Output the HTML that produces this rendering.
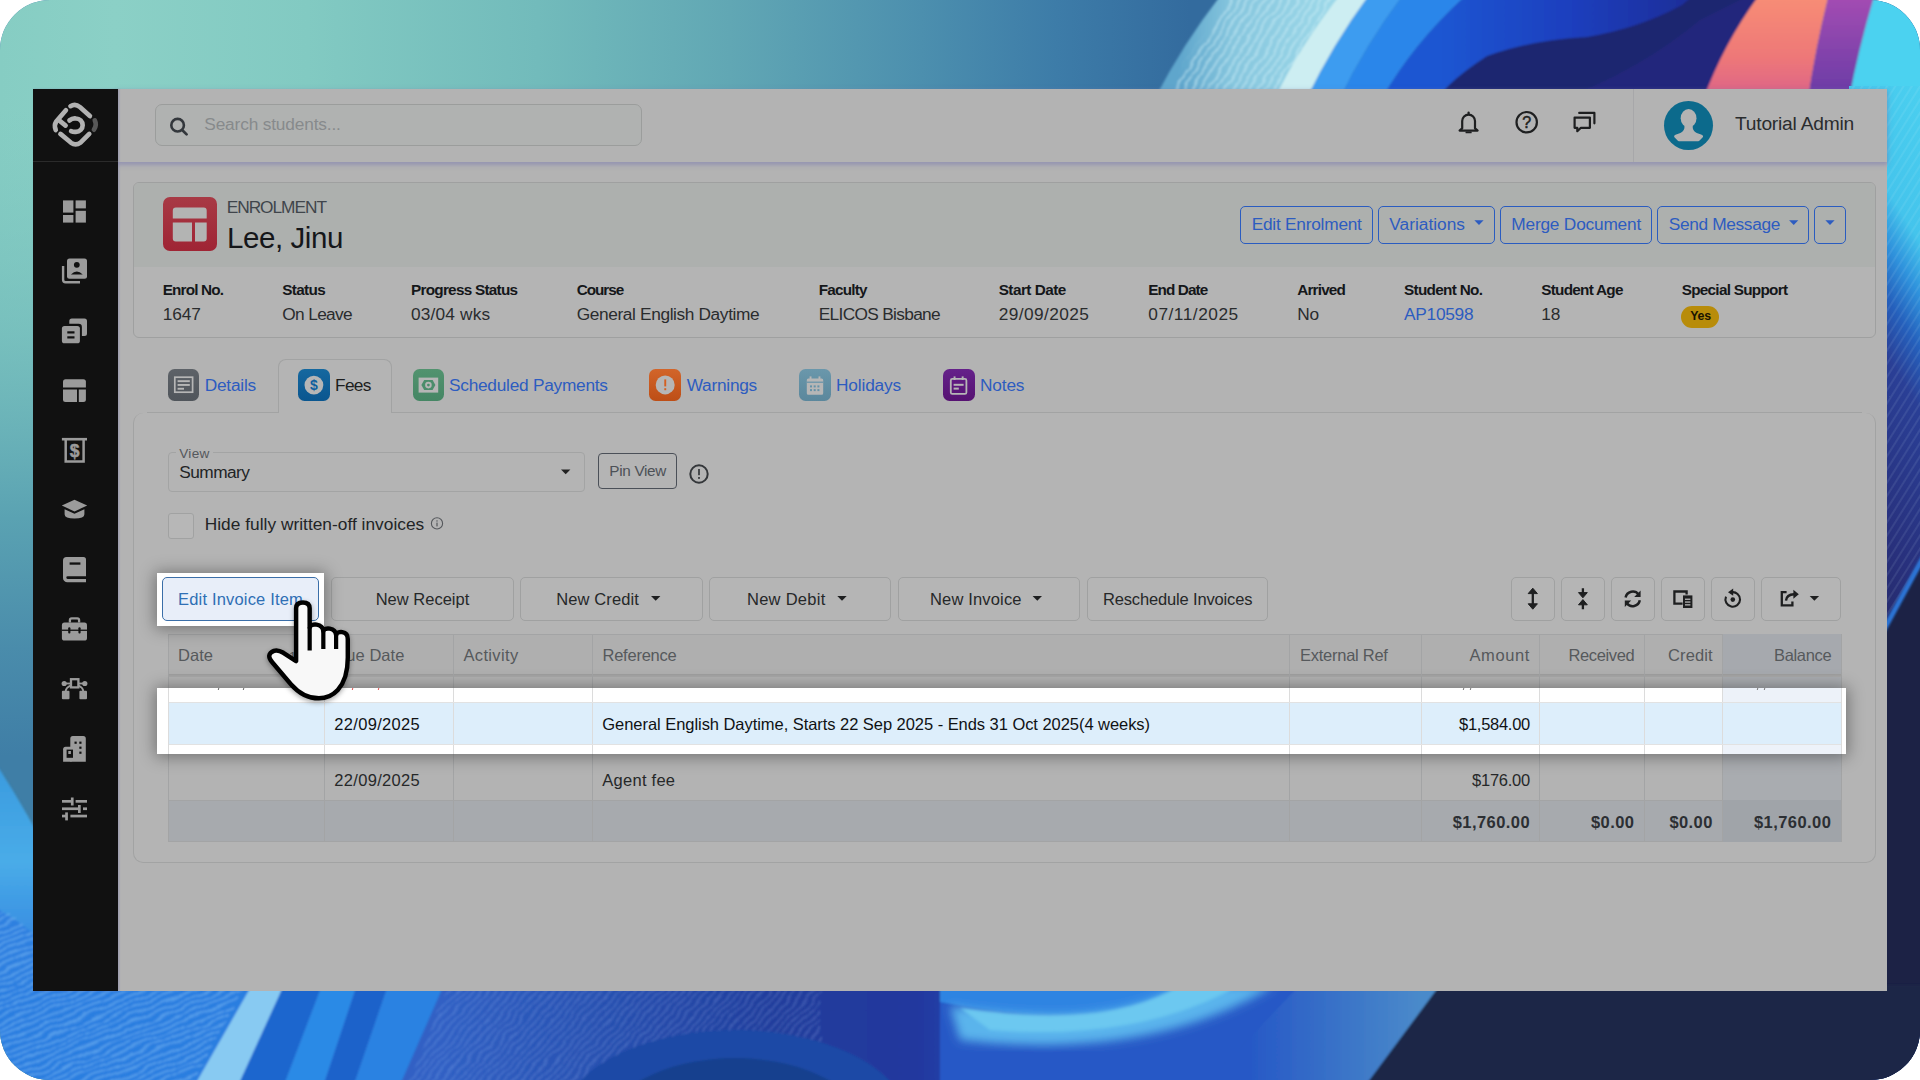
<!DOCTYPE html>
<html lang="en"><head><meta charset="utf-8"><title>Enrolment - Lee, Jinu</title>
<style>
html,body{margin:0;padding:0;background:#fff;}
body{width:1920px;height:1080px;position:relative;overflow:hidden;font-family:'Liberation Sans',sans-serif;}
.a{position:absolute;box-sizing:border-box;}
.t{position:absolute;white-space:pre;line-height:1;}
svg{position:absolute;overflow:visible;}
</style></head><body>
<div class="a" id="bg" style="left:0;top:0;width:1920px;height:1080px;border-radius:50px;overflow:hidden;background:#3a78a8;">
<svg width="1920" height="1080" viewBox="0 0 1920 1080" style="left:0;top:0">
<defs>
<linearGradient id="gTop" x1="0" y1="0" x2="1920" y2="0" gradientUnits="userSpaceOnUse">
<stop offset="0" stop-color="#86cdc3"/><stop offset="0.06" stop-color="#8bd0c6"/><stop offset="0.16" stop-color="#82cac2"/><stop offset="0.28" stop-color="#72bbbb"/>
<stop offset="0.38" stop-color="#61a7b4"/><stop offset="0.48" stop-color="#4c8fae"/><stop offset="0.55" stop-color="#3d7ca8"/><stop offset="0.62" stop-color="#336b9e"/><stop offset="1" stop-color="#336b9e"/>
</linearGradient>
<linearGradient id="gLeft" x1="0" y1="0" x2="0" y2="1080" gradientUnits="userSpaceOnUse">
<stop offset="0.1" stop-color="#7cc6c0" stop-opacity="0"/><stop offset="0.3" stop-color="#6fb8ba" stop-opacity=".6"/><stop offset="0.48" stop-color="#5aa2b2"/><stop offset="0.6" stop-color="#4a8cab"/><stop offset="0.7" stop-color="#3f7ea6"/>
</linearGradient>
<linearGradient id="gRight" x1="0" y1="0" x2="0" y2="1080" gradientUnits="userSpaceOnUse" gradientTransform="translate(1887,0) skewY(58) translate(-1887,0)">
<stop offset="0" stop-color="#4cd2f0"/><stop offset="0.175" stop-color="#44c4ec"/><stop offset="0.225" stop-color="#2f92dc"/><stop offset="0.275" stop-color="#2560bc"/><stop offset="0.33" stop-color="#2a3f96"/><stop offset="0.5" stop-color="#28307c"/><stop offset="0.56" stop-color="#262c70"/>
</linearGradient>
<linearGradient id="gCoral" x1="0" y1="0" x2="0" y2="95" gradientUnits="userSpaceOnUse"><stop offset="0" stop-color="#f78c76"/><stop offset="0.6" stop-color="#ee7878"/><stop offset="1" stop-color="#dc6488"/></linearGradient>
<linearGradient id="gPurple" x1="0" y1="0" x2="0" y2="95" gradientUnits="userSpaceOnUse"><stop offset="0" stop-color="#a24cb2"/><stop offset="1" stop-color="#6a3ca6"/></linearGradient>
<linearGradient id="gRip" x1="1180" y1="0" x2="1330" y2="0" gradientUnits="userSpaceOnUse"><stop offset="0" stop-color="#5fa6cc"/><stop offset="0.35" stop-color="#86c6de"/><stop offset="1" stop-color="#9cd8e8"/></linearGradient>
<linearGradient id="gRoyal" x1="1440" y1="0" x2="1700" y2="0" gradientUnits="userSpaceOnUse"><stop offset="0" stop-color="#1d56d2"/><stop offset="0.5" stop-color="#1a3fbe"/><stop offset="1" stop-color="#1c2c96"/></linearGradient>
<linearGradient id="gBotRip" x1="440" y1="0" x2="1000" y2="0" gradientUnits="userSpaceOnUse"><stop offset="0" stop-color="#3060c4"/><stop offset="0.3" stop-color="#2850b0"/><stop offset="0.6" stop-color="#213d9c"/><stop offset="0.85" stop-color="#23389e"/><stop offset="1" stop-color="#2248b8"/></linearGradient>
<pattern id="pRip" width="7" height="7" patternUnits="userSpaceOnUse" patternTransform="rotate(-58)"><rect width="7" height="2" fill="#d8f4fa" opacity=".45"/></pattern>
<pattern id="pRipB" width="6" height="6" patternUnits="userSpaceOnUse" patternTransform="rotate(-22)"><rect width="6" height="1.6" fill="#9cd4fa" opacity=".42"/></pattern>
<pattern id="pRipC" width="6" height="6" patternUnits="userSpaceOnUse" patternTransform="rotate(-48)"><rect width="6" height="1.5" fill="#a8c8f8" opacity=".24"/></pattern>
<linearGradient id="gSteel" x1="1250" y1="0" x2="1420" y2="0" gradientUnits="userSpaceOnUse"><stop offset="0" stop-color="#2759c6"/><stop offset="1" stop-color="#4a8aca"/></linearGradient>
<linearGradient id="gLB" x1="0" y1="760" x2="0" y2="930" gradientUnits="userSpaceOnUse"><stop offset="0" stop-color="#3a9ade"/><stop offset="0.6" stop-color="#49ace8"/><stop offset="1" stop-color="#3a90e2"/></linearGradient>
<filter id="wav" x="-5%" y="-5%" width="110%" height="110%"><feTurbulence type="fractalNoise" baseFrequency="0.035 0.06" numOctaves="2" seed="7" result="n"/><feDisplacementMap in="SourceGraphic" in2="n" scale="9" xChannelSelector="R" yChannelSelector="G"/><feGaussianBlur stdDeviation="0.5"/></filter>
<filter id="b2"><feGaussianBlur stdDeviation="1.2"/></filter>
<filter id="b6"><feGaussianBlur stdDeviation="5"/></filter>
</defs>
<rect width="1920" height="1080" fill="url(#gTop)"/>
<rect x="0" y="60" width="700" height="1020" fill="url(#gLeft)"/>
<g filter="url(#b2)">
<path d="M1225 -10 L1345 -10 L1275 100 L1154 100 Q1185 40 1225 -10z" fill="url(#gRip)"/>
<path d="M1235 -10 L1345 -10 L1275 100 L1164 100 Q1195 40 1235 -10z" fill="url(#pRip)" filter="url(#wav)"/>
<path d="M1344 -10 L1373 -10 Q1335 40 1306 100 L1274 100 Q1300 45 1344 -10z" fill="#cdeef2"/>
<path d="M1373 -10 L1407 -10 Q1368 40 1339 100 L1306 100 Q1335 40 1373 -10z" fill="#3c9cf0"/>
<path d="M1407 -10 L1472 -10 Q1415 40 1381 100 L1339 100 Q1368 40 1407 -10z" fill="#2b86ea"/>
<path d="M1472 -10 L1720 -10 L1720 100 L1381 100 Q1415 40 1472 -10z" fill="url(#gRoyal)"/>
<path d="M1436 100 Q1450 80 1487 56 Q1531 40 1587 37 Q1640 28 1682 5 L1700 -10 L1780 -10 L1720 100z" fill="#1d2670"/>
<path d="M1560 100 Q1640 70 1700 20 L1760 -10 L1720 100z" fill="#23277c"/>
<path d="M1763 -10 L1830 -10 Q1815 50 1808 100 L1703 100 Q1725 40 1763 -10z" fill="url(#gCoral)"/>
<path d="M1830 -10 L1876 -10 Q1858 50 1849 100 L1808 100 Q1815 50 1830 -10z" fill="url(#gPurple)"/>
<path d="M1876 -10 L1930 -10 L1930 100 L1849 100 Q1858 50 1876 -10z" fill="#4cd2f0"/>
</g>
<rect x="1849" y="86" width="80" height="1000" fill="url(#gRight)"/>
<rect x="1849" y="86" width="80" height="540" fill="url(#pRip)" opacity=".2"/>
<path d="M1930 548 L1880 640 L1880 1090 L1930 1090z" fill="#1c2245"/>
<path d="M1930 545 L1880 637" stroke="#2c74d4" stroke-width="5" fill="none" filter="url(#b2)"/>
<g filter="url(#b2)">
<rect x="-10" y="980" width="1460" height="110" fill="url(#gBotRip)"/>
<path d="M-10 755 Q14 790 40 838 L70 900 L70 1090 L-10 1090z" fill="url(#gLB)"/>
<path d="M-10 905 Q30 925 60 960 L300 985 L260 1090 L-10 1090z" fill="#2f80e0"/>
<path d="M-10 905 Q30 925 60 960 L300 985 L260 1090 L-10 1090z" fill="url(#pRipB)" filter="url(#wav)"/>
<path d="M-10 985 L252 985 L194 1090 L-10 1090z" fill="#2c7ee0"/>
<path d="M-10 985 L246 985 L188 1090 L-10 1090z" fill="url(#pRipB)" filter="url(#wav)"/>
<path d="M252 985 L284 985 L236 1090 L192 1090z" fill="#88caf2"/>
<path d="M284 985 L322 985 L282 1090 L236 1090z" fill="#1e66ce"/>
<path d="M322 985 L357 985 L322 1090 L282 1090z" fill="#2c8ae6"/>
<path d="M357 985 L388 985 L352 1090 L322 1090z" fill="#1e62ca"/>
<path d="M388 985 L444 985 L398 1090 L352 1090z" fill="#2a82e2"/>
<path d="M444 985 L470 985 L420 1090 L398 1090z" fill="#2f6ed0"/>
<path d="M444 985 L1000 985 L1000 1090 L398 1090z" fill="url(#gBotRip)"/>
<path d="M450 985 L820 985 L820 1090 L404 1090z" fill="url(#pRipC)" filter="url(#wav)"/>
<ellipse cx="735" cy="1125" rx="175" ry="95" fill="#1c4aa6"/>
<ellipse cx="735" cy="1130" rx="130" ry="72" fill="#17408e"/>
<ellipse cx="735" cy="1135" rx="95" ry="52" fill="#1a4aa0"/>
<rect x="940" y="985" width="520" height="105" fill="#2759c6"/>
<path d="M940 985 L1180 985 Q1110 1034 940 1002z" fill="#2f84e2"/>
<path d="M960 1040 Q1150 1062 1275 985 L1180 985 Q1110 1030 950 1006z" fill="#5ab4ec" filter="url(#b6)"/>
<path d="M990 1030 Q1140 1042 1240 985 L1180 985 Q1110 1030 960 1008z" fill="#6cc8f0" filter="url(#b2)"/>
<path d="M1300 985 L1442 985 L1364 1090 L1200 1090z" fill="url(#gSteel)"/>
<path d="M1440 985 L1930 985 L1930 1090 L1362 1090z" fill="#1d2647"/>
</g>
</svg></div>
<div class="a" style="left:33.0px;top:89.0px;width:1854.3px;height:902.0px;background:#b3b3b3;"></div>
<div class="a" style="left:118.0px;top:89.0px;width:1769.3px;height:73.0px;background:#b3b3b3;box-shadow:0 2px 4px 1px rgba(120,120,175,.5);"></div>
<div class="a" style="left:1632.5px;top:89.0px;width:1.0px;height:73.0px;background:#a7a7a9;"></div>
<div class="a" style="left:33.0px;top:89.0px;width:84.8px;height:902.0px;background:#111111;box-shadow:1px 0 2px rgba(110,110,170,.4);"></div>
<div class="a" style="left:33.0px;top:161.0px;width:84.8px;height:1.0px;background:#2b2b2b;"></div>
<div class="a" style="left:154.7px;top:104.3px;width:487.0px;height:41.4px;background:#b0b2b1;border:1px solid #9b9d9c;border-radius:7px;"></div>
<div class="a" style="left:1664.2px;top:100.8px;width:49.2px;height:49.2px;border-radius:50%;background:#0c6a8c;overflow:hidden;"><svg style="left:0;top:0" width="49.2" height="49.2" viewBox="0 0 49.2 49.2"><ellipse cx="24.6" cy="17.2" rx="7.9" ry="9.1" fill="#b3b3b3"/><path d="M20.4 24.5 C20.9 29 19 31 15 32.5 L11.5 33.8 Q9.5 34.6 10.2 36 L13.6 39.6 Q14.2 40.2 15 40.2 L34.2 40.2 Q35 40.2 35.6 39.6 L39 36 Q39.7 34.6 37.7 33.8 L34.2 32.5 C30.2 31 28.3 29 28.8 24.5 Z" fill="#b3b3b3"/></svg></div>
<div class="a" style="left:132.7px;top:181.7px;width:1743.0px;height:156.2px;background:#b4b4b4;border:1px solid #9fa0a0;border-radius:6px;"></div>
<div class="a" style="left:133.7px;top:182.7px;width:1741.0px;height:84.0px;background:#adb0ae;border-radius:5px 5px 0 0;"></div>
<div class="a" style="left:163px;top:197.3px;width:54px;height:54px;border-radius:7px;background:linear-gradient(#a83a45,#9f2434);"><svg style="left:0;top:0" width="54" height="54" viewBox="0 0 54 54"><path fill="#b3b4b3" d="M12.8 10.6 h27.9 a3 3 0 0 1 3 3 v8 h-33.9 v-8 a3 3 0 0 1 3 -3 z M9.8 25.5 h19.2 v18.9 h-16.2 a3 3 0 0 1 -3 -3 z M32 25.5 h11.7 v15.9 a3 3 0 0 1 -3 3 h-8.7 z"/></svg></div>
<div class="a" style="left:1240.0px;top:206.3px;width:132.7px;height:37.4px;border:1.5px solid #2a5cc0;border-radius:5px;"></div>
<div class="a" style="left:1378.3px;top:206.3px;width:116.7px;height:37.4px;border:1.5px solid #2a5cc0;border-radius:5px;"></div>
<div class="a" style="left:1500.3px;top:206.3px;width:151.7px;height:37.4px;border:1.5px solid #2a5cc0;border-radius:5px;"></div>
<div class="a" style="left:1657.0px;top:206.3px;width:152.3px;height:37.4px;border:1.5px solid #2a5cc0;border-radius:5px;"></div>
<div class="a" style="left:1814.3px;top:206.3px;width:31.7px;height:37.4px;border:1.5px solid #2a5cc0;border-radius:5px;"></div>
<div class="a" style="left:1681.3px;top:305.8px;width:38.1px;height:22.1px;background:#b88c0a;border-radius:11px;"></div>
<div class="a" style="left:146.7px;top:411.8px;width:1715.3px;height:1.0px;background:#a2a3a3;"></div>
<div class="a" style="left:278.3px;top:359.0px;width:113.4px;height:54.2px;background:#b4b4b4;border:1px solid #a2a3a3;border-bottom:none;border-radius:8px 8px 0 0;"></div>
<div class="a" style="left:133.3px;top:413.0px;width:1742.4px;height:450.0px;background:#b4b4b4;border:1px solid #a2a3a3;border-top:none;border-radius:10px;"></div>
<div class="a" style="left:167.7px;top:369.3px;width:31.7px;height:31.7px;background:linear-gradient(#5d6268,#50555b);border-radius:6.5px;"></div>
<div class="a" style="left:298.3px;top:369.3px;width:31.7px;height:31.7px;background:linear-gradient(#15689f,#0a568f);border-radius:6.5px;"></div>
<div class="a" style="left:412.7px;top:369.3px;width:31.7px;height:31.7px;background:linear-gradient(#52936f,#458664);border-radius:6.5px;"></div>
<div class="a" style="left:649.3px;top:369.3px;width:31.7px;height:31.7px;background:linear-gradient(#d2652a,#bd4e16);border-radius:6.5px;"></div>
<div class="a" style="left:799.0px;top:369.3px;width:31.7px;height:31.7px;background:linear-gradient(#6a97ab,#5b879c);border-radius:6.5px;"></div>
<div class="a" style="left:943.0px;top:369.3px;width:31.7px;height:31.7px;background:linear-gradient(#65218a,#561272);border-radius:6.5px;"></div>
<div class="a" style="left:168.3px;top:451.7px;width:417.0px;height:40.0px;border:1px solid #a3a4a4;border-radius:4px;background:#b4b4b4;"></div>
<div class="a" style="left:175.5px;top:450.0px;width:37.5px;height:6.0px;background:#b4b4b4;"></div>
<div class="a" style="left:598.3px;top:452.7px;width:78.7px;height:36.7px;border:1px solid #4b5058;border-radius:4px;"></div>
<div class="a" style="left:168.3px;top:513.3px;width:26.0px;height:26.0px;border:1px solid #a1a2a2;border-radius:3px;background:#b7b7b7;"></div>
<div class="a" style="left:331.3px;top:576.7px;width:182.4px;height:44.0px;border:1px solid #a0a1a1;border-radius:5px;background:#b5b5b5;"></div>
<div class="a" style="left:520.3px;top:576.7px;width:182.4px;height:44.0px;border:1px solid #a0a1a1;border-radius:5px;background:#b5b5b5;"></div>
<div class="a" style="left:709.3px;top:576.7px;width:182.0px;height:44.0px;border:1px solid #a0a1a1;border-radius:5px;background:#b5b5b5;"></div>
<div class="a" style="left:898.3px;top:576.7px;width:182.0px;height:44.0px;border:1px solid #a0a1a1;border-radius:5px;background:#b5b5b5;"></div>
<div class="a" style="left:1087.0px;top:576.7px;width:181.0px;height:44.0px;border:1px solid #a0a1a1;border-radius:5px;background:#b5b5b5;"></div>
<div class="a" style="left:1511.0px;top:576.7px;width:43.7px;height:44.0px;border:1px solid #a0a1a1;border-radius:5px;background:#b5b5b5;"></div>
<div class="a" style="left:1561.0px;top:576.7px;width:43.7px;height:44.0px;border:1px solid #a0a1a1;border-radius:5px;background:#b5b5b5;"></div>
<div class="a" style="left:1611.0px;top:576.7px;width:43.7px;height:44.0px;border:1px solid #a0a1a1;border-radius:5px;background:#b5b5b5;"></div>
<div class="a" style="left:1661.0px;top:576.7px;width:43.7px;height:44.0px;border:1px solid #a0a1a1;border-radius:5px;background:#b5b5b5;"></div>
<div class="a" style="left:1711.0px;top:576.7px;width:43.7px;height:44.0px;border:1px solid #a0a1a1;border-radius:5px;background:#b5b5b5;"></div>
<div class="a" style="left:1761.0px;top:576.7px;width:80.0px;height:44.0px;border:1px solid #a0a1a1;border-radius:5px;background:#b5b5b5;"></div>
<div class="a" style="left:168.7px;top:634.0px;width:1672.3px;height:40.5px;background:#afafaf;border-top:1px solid #a3a4a5;"></div>
<div class="a" style="left:1722.3px;top:634.0px;width:118.7px;height:40.5px;background:#a6a9ae;"></div>
<div class="a" style="left:168.7px;top:674.3px;width:1672.3px;height:3.0px;background:linear-gradient(#9d9d9d,#a9a9a9);"></div>
<div class="a" style="left:168.7px;top:677.3px;width:1672.3px;height:25.2px;background:#b1b1b1;"></div>
<div class="a" style="left:1722.3px;top:677.3px;width:118.7px;height:25.2px;background:#a9acb0;"></div>
<div class="a" style="left:168.7px;top:744.0px;width:1672.3px;height:56.0px;background:#b3b3b3;"></div>
<div class="a" style="left:1722.3px;top:744.0px;width:118.7px;height:56.0px;background:#a9acb0;"></div>
<div class="a" style="left:168.7px;top:800.0px;width:1672.3px;height:42.0px;background:#a7aaae;border-top:1px solid #a3a4a5;border-bottom:1px solid #a3a4a5;"></div>
<div class="a" style="left:1722.3px;top:800.0px;width:118.7px;height:42.0px;background:#a0a4a9;"></div>
<div class="a" style="left:168.2px;top:634.0px;width:1.0px;height:208.0px;background:#a3a4a5;"></div>
<div class="a" style="left:323.5px;top:634.0px;width:1.0px;height:208.0px;background:#a3a4a5;"></div>
<div class="a" style="left:452.8px;top:634.0px;width:1.0px;height:208.0px;background:#a3a4a5;"></div>
<div class="a" style="left:591.8px;top:634.0px;width:1.0px;height:208.0px;background:#a3a4a5;"></div>
<div class="a" style="left:1288.8px;top:634.0px;width:1.0px;height:208.0px;background:#a3a4a5;"></div>
<div class="a" style="left:1420.8px;top:634.0px;width:1.0px;height:208.0px;background:#a3a4a5;"></div>
<div class="a" style="left:1538.8px;top:634.0px;width:1.0px;height:208.0px;background:#a3a4a5;"></div>
<div class="a" style="left:1643.8px;top:634.0px;width:1.0px;height:208.0px;background:#a3a4a5;"></div>
<div class="a" style="left:1721.8px;top:634.0px;width:1.0px;height:208.0px;background:#a3a4a5;"></div>
<div class="a" style="left:1840.5px;top:634.0px;width:1.0px;height:208.0px;background:#a3a4a5;"></div>
<div class="a" style="left:168.7px;top:702.0px;width:1672.3px;height:1.0px;background:#a3a4a5;"></div>
<div class="a" style="left:157.3px;top:573.3px;width:166.4px;height:52.7px;background:#fff;box-shadow:0 1px 15px 2px rgba(0,0,0,.36);"></div>
<div class="a" style="left:161.7px;top:576.7px;width:157.3px;height:44.0px;background:#e8eef9;border:1.5px solid #3a6ea8;border-radius:5px;"></div>
<div class="a" style="left:157.3px;top:688.3px;width:1688.7px;height:66.0px;background:#fff;box-shadow:0 1px 15px 2px rgba(0,0,0,.36);"></div>
<div class="a" style="left:1722.3px;top:688.3px;width:118.7px;height:66.0px;background:#edf2f9;"></div>
<div class="a" style="left:168.7px;top:702.7px;width:1672.3px;height:41.3px;background:#ddeefb;"></div>
<div class="a" style="left:168.2px;top:688.3px;width:1.0px;height:66.0px;background:#dcdcdc;"></div>
<div class="a" style="left:323.5px;top:688.3px;width:1.0px;height:66.0px;background:#dcdcdc;"></div>
<div class="a" style="left:452.8px;top:688.3px;width:1.0px;height:66.0px;background:#dcdcdc;"></div>
<div class="a" style="left:591.8px;top:688.3px;width:1.0px;height:66.0px;background:#dcdcdc;"></div>
<div class="a" style="left:1288.8px;top:688.3px;width:1.0px;height:66.0px;background:#dcdcdc;"></div>
<div class="a" style="left:1420.8px;top:688.3px;width:1.0px;height:66.0px;background:#dcdcdc;"></div>
<div class="a" style="left:1538.8px;top:688.3px;width:1.0px;height:66.0px;background:#dcdcdc;"></div>
<div class="a" style="left:1643.8px;top:688.3px;width:1.0px;height:66.0px;background:#dcdcdc;"></div>
<div class="a" style="left:1721.8px;top:688.3px;width:1.0px;height:66.0px;background:#dcdcdc;"></div>
<div class="a" style="left:1840.5px;top:688.3px;width:1.0px;height:66.0px;background:#dcdcdc;"></div>
<div class="a" style="left:168.7px;top:702.2px;width:1672.3px;height:1.0px;background:#e2e2e2;"></div>
<div class="a" style="left:168.7px;top:743.6px;width:1672.3px;height:1.0px;background:#e2e2e2;"></div>
<div class="a" style="left:217.6px;top:688.3px;width:1.4px;height:2.3px;background:#666;transform:skewX(-15deg);"></div>
<div class="a" style="left:243.2px;top:688.3px;width:1.4px;height:2.3px;background:#666;transform:skewX(-15deg);"></div>
<div class="a" style="left:352.2px;top:688.3px;width:1.4px;height:2.3px;background:#e05050;transform:skewX(-15deg);"></div>
<div class="a" style="left:377.6px;top:688.3px;width:1.4px;height:2.3px;background:#e05050;transform:skewX(-15deg);"></div>
<div class="a" style="left:1463.0px;top:688.3px;width:1.4px;height:2.3px;background:#777;transform:skewX(-15deg);"></div>
<div class="a" style="left:1469.5px;top:688.3px;width:1.4px;height:2.3px;background:#777;transform:skewX(-15deg);"></div>
<div class="a" style="left:1757.0px;top:688.3px;width:1.4px;height:2.3px;background:#777;transform:skewX(-15deg);"></div>
<div class="a" style="left:1763.5px;top:688.3px;width:1.4px;height:2.3px;background:#777;transform:skewX(-15deg);"></div>
<svg width="1920" height="1080" viewBox="0 0 1920 1080" style="left:0;top:0">
<g transform="translate(40,95) scale(0.0648148)" fill="none" stroke="#b2b2b2" stroke-width="72" stroke-linecap="round" stroke-linejoin="round"><path d="M470 172 Q545 128 615 185 L770 325"/><path d="M400 235 L250 410 Q212 470 243 540"/><path d="M300 395 L395 472"/><path d="M315 600 L480 738 Q550 790 625 735 L760 600"/><path d="M455 392 Q500 354 555 362 A103 103 0 0 1 555 568 Q512 572 480 558"/><path d="M845 392 Q882 462 832 535" stroke="#585858"/></g>
<g fill="#9b9b9b">
<rect x="63" y="200.4" width="10.4" height="12.2"/><rect x="63" y="215" width="10.4" height="7.6"/><rect x="75.6" y="200.4" width="10.3" height="8"/><rect x="75.6" y="210.8" width="10.3" height="11.8"/>
<rect x="67" y="258.4" width="20" height="20.4" rx="2.5"/><path d="M63.1 266 v13.8 a2.5 2.5 0 0 0 2.5 2.5 h14.4" fill="none" stroke="#9b9b9b" stroke-width="2.4"/><circle cx="76.8" cy="264.8" r="2.9" fill="#111"/><path d="M70.9 274.6 q5.9 -6.4 11.8 0 z" fill="#111"/>
<path d="M71.8 318.6 h12.7 a2.5 2.5 0 0 1 2.5 2.5 v12.4 a2.5 2.5 0 0 1 -2.5 2.5 h-2.6 v-9 a3.2 3.2 0 0 0 -3.2 -3.2 h-9.4 v-2.7 a2.5 2.5 0 0 1 2.5 -2.5z"/><rect x="61.9" y="325.9" width="18" height="17.4" rx="2.6"/><rect x="67.3" y="331.3" width="7.2" height="2.2" fill="#111"/><rect x="67.3" y="336.3" width="7.2" height="2.2" fill="#111"/>
<path d="M65.5 379.2 h17.9 a2.5 2.5 0 0 1 2.5 2.5 v5.8 h-22.9 v-5.8 a2.5 2.5 0 0 1 2.5 -2.5z"/><path d="M63 389.5 h14 v12.4 h-11.5 a2.5 2.5 0 0 1 -2.5 -2.5z"/><path d="M78.8 389.5 h7.1 v9.9 a2.5 2.5 0 0 1 -2.5 2.5 h-4.6z"/>
<rect x="61.9" y="437.9" width="25.1" height="2.6"/><path d="M65.7 440 v21.4 h17.9 v-21.4" fill="none" stroke="#9b9b9b" stroke-width="2.5"/>
<text x="74.7" y="456.9" style="font-family:'Liberation Sans',sans-serif;font-size:17.5px;font-weight:700" text-anchor="middle" stroke="#9b9b9b" stroke-width=".5">$</text>
<path d="M74.5 499.8 L87.2 505.6 L74.5 511.4 L61.8 505.6z"/><path d="M64.6 509.2 L74.5 513.8 L84.4 509.2 V514.2 Q84.4 518.6 74.5 518.6 Q64.6 518.6 64.6 514.2z"/>
<path d="M66.5 557.1 h17 a2.5 2.5 0 0 1 2.5 2.5 v16.7 h-18.4 a1.3 1.3 0 0 0 0 2.6 h18.4 v3.4 h-18.6 a4.4 4.4 0 0 1 -4.4 -4.4 v-17.3 a3.5 3.5 0 0 1 3.5 -3.5z"/><rect x="69.6" y="562.4" width="10.8" height="2.3" fill="#111"/>
<rect x="61.9" y="622.6" width="25.1" height="17.9" rx="2.6"/><path d="M69.9 622.6 v-2.4 a1.8 1.8 0 0 1 1.8 -1.8 h5.6 a1.8 1.8 0 0 1 1.8 1.8 v2.4" fill="none" stroke="#9b9b9b" stroke-width="2.3"/><rect x="61.9" y="629.6" width="25.1" height="1.3" fill="#111"/><rect x="68.2" y="627.2" width="2.2" height="6.4" rx="1" fill="#111"/><rect x="78.4" y="627.2" width="2.2" height="6.4" rx="1" fill="#111"/>
<rect x="71" y="679.2" width="7.4" height="8.2" fill="#111" stroke="#9b9b9b" stroke-width="2.3"/><circle cx="64.2" cy="683.5" r="2.6"/><circle cx="84.8" cy="683.5" r="2.6"/><rect x="64" y="682.6" width="7" height="1.8"/><rect x="78" y="682.6" width="7" height="1.8"/><rect x="61.9" y="690.8" width="7.6" height="8.4" rx="1"/><rect x="79.4" y="690.8" width="7.6" height="8.4" rx="1"/><path d="M70.5 685.6 Q66 687.5 65.6 691.5 M78.5 685.6 Q83 687.5 83.3 691.5" fill="none" stroke="#9b9b9b" stroke-width="1.9"/>
<path d="M72.8 736.1 h10.5 a2.5 2.5 0 0 1 2.5 2.5 v23.1 h-15.5 v-23.1 a2.5 2.5 0 0 1 2.5 -2.5z"/><path d="M65.6 746.7 h6 v15 h-8.5 v-12.5 a2.5 2.5 0 0 1 2.5 -2.5z"/><rect x="66.6" y="749.6" width="6.4" height="8.2" fill="#111"/><rect x="68.3" y="751" width="2.6" height="3" fill="#9b9b9b"/><rect x="74.5" y="741.6" width="2.2" height="2.2" fill="#111"/><rect x="79.3" y="741.6" width="2.2" height="2.2" fill="#111"/><rect x="79.3" y="746.6" width="2.2" height="2.2" fill="#111"/><rect x="79.3" y="751.6" width="2.2" height="2.2" fill="#111"/>
<rect x="62" y="800" width="10" height="2.7"/><rect x="70.9" y="797.5" width="2.7" height="8"/><rect x="75.6" y="800" width="11.4" height="2.7"/><rect x="62" y="807.4" width="17" height="2.7"/><rect x="78" y="805" width="2.7" height="8"/><rect x="83" y="807.4" width="4" height="2.7"/><rect x="62" y="814.7" width="4" height="2.7"/><rect x="65.2" y="812.4" width="2.7" height="8"/><rect x="70.4" y="814.7" width="16.6" height="2.7"/>
</g>
<g fill="none" stroke="#1e1f20" stroke-width="2.2" stroke-linejoin="round" stroke-linecap="round">
<circle cx="177.6" cy="125.2" r="6.3" stroke="#33373c" stroke-width="2.6"/><path d="M182.4 130.2 L186.6 134.4" stroke="#33373c" stroke-width="2.7"/>
<path d="M1462.2 128.2 V121 a6.4 6.4 0 0 1 12.8 0 V128.2 L1477.6 130.6 H1459.6z"/><path d="M1468.6 112.6 v1.6"/><path d="M1466.4 132.4 h4.4" stroke-width="1.9"/>
<circle cx="1526.7" cy="122.2" r="10.2"/>
<path d="M1574.6 117.6 h15.3 v10.2 h-9 l-3.6 3.4 v-3.4 h-2.7z" /><path d="M1579.2 112.9 h15.2 v10.4" />
</g>
<text x="1526.7" y="127.6" font-family="Liberation Sans,sans-serif" font-size="16" font-weight="400" text-anchor="middle" fill="#1e1f20" stroke="#1e1f20" stroke-width=".5">?</text>
<path d="M1474.4 220.2 h9.2 l-4.6 4.8z" fill="#2d5cc0"/>
<path d="M1789.1000000000001 220.2 h9.2 l-4.6 4.8z" fill="#2d5cc0"/>
<path d="M1825.4 220.2 h9.2 l-4.6 4.8z" fill="#2d5cc0"/>
<path d="M561 469.4 h9.4 l-4.7 4.8z" fill="#222"/>
<path d="M651.0 596 h9.4 l-4.7 4.8z" fill="#1e1f20"/>
<path d="M837.3 596 h9.4 l-4.7 4.8z" fill="#1e1f20"/>
<path d="M1032.6 596 h9.4 l-4.7 4.8z" fill="#1e1f20"/>
<path d="M1809.7 596 h9.4 l-4.7 4.8z" fill="#1e1f20"/>
<circle cx="699" cy="474" r="8.7" fill="none" stroke="#34373a" stroke-width="2"/><rect x="698.1" y="469" width="1.8" height="6.2" fill="#3a3d40"/><rect x="698.1" y="477" width="1.8" height="1.9" fill="#3a3d40"/>
<circle cx="437" cy="523.4" r="5.6" fill="none" stroke="#55585c" stroke-width="1.1"/><rect x="436.4" y="522.6" width="1.2" height="3.8" fill="#55585c"/><rect x="436.4" y="520.3" width="1.2" height="1.3" fill="#55585c"/>
<rect x="174.8" y="377.2" width="17.8" height="15" fill="none" stroke="#b6b6b6" stroke-width="1.7"/><rect x="177.6" y="380.2" width="12.2" height="1.9" fill="#b6b6b6"/><rect x="177.6" y="384" width="12.2" height="1.9" fill="#b6b6b6"/><rect x="177.6" y="387.8" width="6.4" height="1.9" fill="#b6b6b6"/>
<circle cx="313.9" cy="385.1" r="9.4" fill="#b6b6b6"/>
<text x="313.9" y="390.2" style="font-family:'Liberation Sans',sans-serif;font-size:14px;font-weight:700" text-anchor="middle" fill="#0e5f9e">$</text>
<rect x="418.6" y="377.6" width="19.6" height="15" fill="#b6b6b6"/><path d="M421.4 385.1 l2.8 -5 h8.4 l2.8 5 l-2.8 5 h-8.4z" fill="#4b8d6b"/><circle cx="428.4" cy="385.1" r="3.3" fill="#b6b6b6"/><circle cx="428.4" cy="385.1" r="1.4" fill="#4b8d6b"/>
<circle cx="665.2" cy="384.9" r="9.5" fill="#b6b6b6"/><rect x="664.3" y="379.4" width="1.9" height="7" fill="#d55f20"/><rect x="664.3" y="388.2" width="1.9" height="2" fill="#d55f20"/>
<path d="M808.3 378.4 h13.4 a1.5 1.5 0 0 1 1.5 1.5 v13.4 a1.5 1.5 0 0 1 -1.5 1.5 h-13.4 a1.5 1.5 0 0 1 -1.5 -1.5 v-13.4 a1.5 1.5 0 0 1 1.5 -1.5z" fill="#b6b6b6"/><rect x="809.6" y="376.4" width="1.9" height="3.4" fill="#b6b6b6"/><rect x="818.5" y="376.4" width="1.9" height="3.4" fill="#b6b6b6"/><rect x="806.8" y="381.6" width="16.4" height="1.2" fill="#6592a8"/>
<rect x="810.0" y="385.4" width="2" height="2" fill="#6592a8"/>
<rect x="813.7" y="385.4" width="2" height="2" fill="#6592a8"/>
<rect x="817.4" y="385.4" width="2" height="2" fill="#6592a8"/>
<rect x="810.0" y="389.1" width="2" height="2" fill="#6592a8"/>
<rect x="813.7" y="389.1" width="2" height="2" fill="#6592a8"/>
<rect x="817.4" y="389.1" width="2" height="2" fill="#6592a8"/>
<rect x="950.8" y="378.9" width="15.6" height="15" rx="1.5" fill="none" stroke="#b6b6b6" stroke-width="1.8"/><rect x="953.6" y="376.4" width="1.9" height="3.6" fill="#b6b6b6"/><rect x="961.7" y="376.4" width="1.9" height="3.6" fill="#b6b6b6"/><rect x="953.6" y="383.8" width="10" height="2" fill="#b6b6b6"/><rect x="953.6" y="387.6" width="5.2" height="2" fill="#b6b6b6"/>
<g fill="none" stroke="#1e1f20" stroke-width="2.3" stroke-linejoin="miter">
<path d="M1532.8 590 V607.4"/>
<path d="M1528.2 593.6 L1532.8 588.2 L1537.4 593.6z M1528.2 603.8 L1532.8 609.2 L1537.4 603.8z" fill="#1e1f20" stroke-width="1"/>
<path d="M1582.9 588.2 V594 M1582.9 603.4 V609.2"/>
<path d="M1578.5 592.6 L1582.9 597.8 L1587.3 592.6z M1578.5 604.8 L1582.9 599.6 L1587.3 604.8z" fill="#1e1f20" stroke-width="1"/>
<path d="M1625.6 597.4 A7.3 7.3 0 0 1 1638.6 594.4" stroke-width="2.5"/><path d="M1639.8 600.2 A7.3 7.3 0 0 1 1626.8 603.2" stroke-width="2.5"/>
<path d="M1640.6 590.6 V597 H1634.2z M1624.8 607 V600.6 H1631.2z" fill="#1e1f20" stroke="none"/>
<path d="M1682.6 603.6 H1674.4 V591.5 H1686.6 V594.6"/>
<rect x="1683" y="595.4" width="9.4" height="12.6" fill="#1e1f20" stroke="none"/><rect x="1685" y="598.6" width="5.4" height="1.3" fill="#b5b5b5" stroke="none"/><rect x="1685" y="601.4" width="5.4" height="1.3" fill="#b5b5b5" stroke="none"/><rect x="1685" y="604.2" width="5.4" height="1.3" fill="#b5b5b5" stroke="none"/>
<path d="M1731.6 592.2 A7.3 7.3 0 1 1 1726 596.6" stroke-width="2.1"/>
<path d="M1733.2 588.6 V595.8 L1728 592.2z" fill="#1e1f20" stroke="none"/><circle cx="1732.8" cy="599.6" r="2.3" fill="#1e1f20" stroke="none"/>
<path d="M1786.6 592.2 H1781.8 V605.4 H1792.4 V601.4"/>
<path d="M1786 600.6 Q1786.6 594.4 1794 594.2" stroke-width="2.4"/>
<path d="M1793.4 589.8 L1798.8 594.3 L1793.4 598.8z" fill="#1e1f20" stroke="none"/>
</g>
<text x="289" y="660.7" font-family="Liberation Sans,sans-serif" font-size="13" fill="#56595c">1</text>
</svg>
<div id="texts">
<span class="t" style="left:204.3px;top:116.1px;font-size:17.3px;font-weight:400;color:#878a8c;font-family:'Liberation Sans',sans-serif;letter-spacing:-0.161px">Search students...</span>
<span class="t" style="left:1735.0px;top:114.4px;font-size:19.2px;font-weight:400;color:#2a2c2e;font-family:'Liberation Sans',sans-serif;letter-spacing:-0.210px">Tutorial Admin</span>
<span class="t" style="left:226.7px;top:198.9px;font-size:17.3px;font-weight:400;color:#40454b;font-family:'Liberation Sans',sans-serif;letter-spacing:-1.022px">ENROLMENT</span>
<span class="t" style="left:227.0px;top:223.3px;font-size:29.5px;font-weight:400;color:#15171a;font-family:'Liberation Sans',sans-serif;letter-spacing:-0.415px">Lee, Jinu</span>
<span class="t" style="left:1251.7px;top:215.9px;font-size:17.3px;font-weight:400;color:#2d5cc0;font-family:'Liberation Sans',sans-serif;letter-spacing:-0.239px">Edit Enrolment</span>
<span class="t" style="left:1389.3px;top:215.9px;font-size:17.3px;font-weight:400;color:#2d5cc0;font-family:'Liberation Sans',sans-serif;letter-spacing:0.012px">Variations</span>
<span class="t" style="left:1511.3px;top:215.9px;font-size:17.3px;font-weight:400;color:#2d5cc0;font-family:'Liberation Sans',sans-serif;letter-spacing:-0.203px">Merge Document</span>
<span class="t" style="left:1668.7px;top:215.9px;font-size:17.3px;font-weight:400;color:#2d5cc0;font-family:'Liberation Sans',sans-serif;letter-spacing:-0.333px">Send Message</span>
<span class="t" style="left:162.7px;top:282.3px;font-size:15.3px;font-weight:700;color:#15171a;font-family:'Liberation Sans',sans-serif;letter-spacing:-0.822px">Enrol No.</span>
<span class="t" style="left:162.7px;top:306.4px;font-size:17.3px;font-weight:400;color:#2a2c2e;font-family:'Liberation Sans',sans-serif;letter-spacing:-0.113px">1647</span>
<span class="t" style="left:282.3px;top:282.3px;font-size:15.3px;font-weight:700;color:#15171a;font-family:'Liberation Sans',sans-serif;letter-spacing:-0.675px">Status</span>
<span class="t" style="left:282.3px;top:306.4px;font-size:17.3px;font-weight:400;color:#2a2c2e;font-family:'Liberation Sans',sans-serif;letter-spacing:-0.657px">On Leave</span>
<span class="t" style="left:411.0px;top:282.3px;font-size:15.3px;font-weight:700;color:#15171a;font-family:'Liberation Sans',sans-serif;letter-spacing:-0.735px">Progress Status</span>
<span class="t" style="left:411.0px;top:306.4px;font-size:17.3px;font-weight:400;color:#2a2c2e;font-family:'Liberation Sans',sans-serif;letter-spacing:0.165px">03/04 wks</span>
<span class="t" style="left:576.7px;top:282.3px;font-size:15.3px;font-weight:700;color:#15171a;font-family:'Liberation Sans',sans-serif;letter-spacing:-1.017px">Course</span>
<span class="t" style="left:576.7px;top:306.4px;font-size:17.3px;font-weight:400;color:#2a2c2e;font-family:'Liberation Sans',sans-serif;letter-spacing:-0.371px">General English Daytime</span>
<span class="t" style="left:818.7px;top:282.3px;font-size:15.3px;font-weight:700;color:#15171a;font-family:'Liberation Sans',sans-serif;letter-spacing:-0.795px">Faculty</span>
<span class="t" style="left:818.7px;top:306.4px;font-size:17.3px;font-weight:400;color:#2a2c2e;font-family:'Liberation Sans',sans-serif;letter-spacing:-0.667px">ELICOS Bisbane</span>
<span class="t" style="left:998.7px;top:282.3px;font-size:15.3px;font-weight:700;color:#15171a;font-family:'Liberation Sans',sans-serif;letter-spacing:-0.527px">Start Date</span>
<span class="t" style="left:998.7px;top:306.4px;font-size:17.3px;font-weight:400;color:#2a2c2e;font-family:'Liberation Sans',sans-serif;letter-spacing:0.410px">29/09/2025</span>
<span class="t" style="left:1148.3px;top:282.3px;font-size:15.3px;font-weight:700;color:#15171a;font-family:'Liberation Sans',sans-serif;letter-spacing:-0.912px">End Date</span>
<span class="t" style="left:1148.3px;top:306.4px;font-size:17.3px;font-weight:400;color:#2a2c2e;font-family:'Liberation Sans',sans-serif;letter-spacing:0.518px">07/11/2025</span>
<span class="t" style="left:1297.3px;top:282.3px;font-size:15.3px;font-weight:700;color:#15171a;font-family:'Liberation Sans',sans-serif;letter-spacing:-0.837px">Arrived</span>
<span class="t" style="left:1297.3px;top:306.4px;font-size:17.3px;font-weight:400;color:#2a2c2e;font-family:'Liberation Sans',sans-serif;letter-spacing:-0.197px">No</span>
<span class="t" style="left:1404.0px;top:282.3px;font-size:15.3px;font-weight:700;color:#15171a;font-family:'Liberation Sans',sans-serif;letter-spacing:-0.684px">Student No.</span>
<span class="t" style="left:1404.0px;top:306.4px;font-size:17.3px;font-weight:400;color:#2d5cc0;font-family:'Liberation Sans',sans-serif;letter-spacing:-0.258px">AP10598</span>
<span class="t" style="left:1541.3px;top:282.3px;font-size:15.3px;font-weight:700;color:#15171a;font-family:'Liberation Sans',sans-serif;letter-spacing:-0.738px">Student Age</span>
<span class="t" style="left:1541.3px;top:306.4px;font-size:17.3px;font-weight:400;color:#2a2c2e;font-family:'Liberation Sans',sans-serif;letter-spacing:-0.267px">18</span>
<span class="t" style="left:1681.7px;top:282.3px;font-size:15.3px;font-weight:700;color:#15171a;font-family:'Liberation Sans',sans-serif;letter-spacing:-0.724px">Special Support</span>
<span class="t" style="left:1690.2px;top:310.1px;font-size:12.4px;font-weight:700;color:#1a1400;font-family:'Liberation Sans',sans-serif;letter-spacing:-0.158px">Yes</span>
<span class="t" style="left:204.7px;top:376.9px;font-size:17.3px;font-weight:400;color:#2d5cc0;font-family:'Liberation Sans',sans-serif;letter-spacing:-0.218px">Details</span>
<span class="t" style="left:335.0px;top:376.9px;font-size:17.3px;font-weight:400;color:#1c1e20;font-family:'Liberation Sans',sans-serif;letter-spacing:-0.680px">Fees</span>
<span class="t" style="left:449.0px;top:376.9px;font-size:17.3px;font-weight:400;color:#2d5cc0;font-family:'Liberation Sans',sans-serif;letter-spacing:-0.256px">Scheduled Payments</span>
<span class="t" style="left:686.7px;top:376.9px;font-size:17.3px;font-weight:400;color:#2d5cc0;font-family:'Liberation Sans',sans-serif;letter-spacing:-0.257px">Warnings</span>
<span class="t" style="left:836.0px;top:376.9px;font-size:17.3px;font-weight:400;color:#2d5cc0;font-family:'Liberation Sans',sans-serif;letter-spacing:-0.160px">Holidays</span>
<span class="t" style="left:980.0px;top:376.9px;font-size:17.3px;font-weight:400;color:#2d5cc0;font-family:'Liberation Sans',sans-serif;letter-spacing:-0.171px">Notes</span>
<span class="t" style="left:179.3px;top:446.5px;font-size:13.6px;font-weight:400;color:#55585c;font-family:'Liberation Sans',sans-serif;letter-spacing:0.245px">View</span>
<span class="t" style="left:179.3px;top:463.6px;font-size:17.3px;font-weight:400;color:#222426;font-family:'Liberation Sans',sans-serif;letter-spacing:-0.562px">Summary</span>
<span class="t" style="left:609.3px;top:463.3px;font-size:15.3px;font-weight:400;color:#4d5157;font-family:'Liberation Sans',sans-serif;letter-spacing:-0.319px">Pin View</span>
<span class="t" style="left:204.7px;top:515.9px;font-size:17.3px;font-weight:400;color:#222426;font-family:'Liberation Sans',sans-serif;letter-spacing:0.030px">Hide fully written-off invoices</span>
<span class="t" style="left:178.0px;top:590.7px;font-size:16.5px;font-weight:400;color:#2f6fb5;font-family:'Liberation Sans',sans-serif;letter-spacing:0.177px">Edit Invoice Item</span>
<span class="t" style="left:375.7px;top:590.7px;font-size:16.5px;font-weight:400;color:#262829;font-family:'Liberation Sans',sans-serif;letter-spacing:0.005px">New Receipt</span>
<span class="t" style="left:556.3px;top:590.7px;font-size:16.5px;font-weight:400;color:#262829;font-family:'Liberation Sans',sans-serif;letter-spacing:0.109px">New Credit</span>
<span class="t" style="left:747.0px;top:590.7px;font-size:16.5px;font-weight:400;color:#262829;font-family:'Liberation Sans',sans-serif;letter-spacing:0.264px">New Debit</span>
<span class="t" style="left:930.0px;top:590.7px;font-size:16.5px;font-weight:400;color:#262829;font-family:'Liberation Sans',sans-serif;letter-spacing:0.166px">New Invoice</span>
<span class="t" style="left:1103.0px;top:590.7px;font-size:16.5px;font-weight:400;color:#262829;font-family:'Liberation Sans',sans-serif;letter-spacing:-0.156px">Reschedule Invoices</span>
<span class="t" style="left:178.0px;top:646.7px;font-size:16.5px;font-weight:400;color:#56595c;font-family:'Liberation Sans',sans-serif;letter-spacing:0.035px">Date</span>
<span class="t" style="left:334.3px;top:646.7px;font-size:16.5px;font-weight:400;color:#56595c;font-family:'Liberation Sans',sans-serif;letter-spacing:0.060px">Due Date</span>
<span class="t" style="left:463.5px;top:646.7px;font-size:16.5px;font-weight:400;color:#56595c;font-family:'Liberation Sans',sans-serif;letter-spacing:0.342px">Activity</span>
<span class="t" style="left:602.5px;top:646.7px;font-size:16.5px;font-weight:400;color:#56595c;font-family:'Liberation Sans',sans-serif;letter-spacing:-0.238px">Reference</span>
<span class="t" style="left:1300.0px;top:646.7px;font-size:16.5px;font-weight:400;color:#56595c;font-family:'Liberation Sans',sans-serif;letter-spacing:-0.258px">External Ref</span>
<span class="t" style="left:1469.5px;top:646.7px;font-size:16.5px;font-weight:400;color:#56595c;font-family:'Liberation Sans',sans-serif;letter-spacing:0.604px">Amount</span>
<span class="t" style="left:1568.5px;top:646.7px;font-size:16.5px;font-weight:400;color:#56595c;font-family:'Liberation Sans',sans-serif;letter-spacing:-0.375px">Received</span>
<span class="t" style="left:1668.0px;top:646.7px;font-size:16.5px;font-weight:400;color:#56595c;font-family:'Liberation Sans',sans-serif;letter-spacing:0.114px">Credit</span>
<span class="t" style="left:1774.0px;top:646.7px;font-size:16.5px;font-weight:400;color:#56595c;font-family:'Liberation Sans',sans-serif;letter-spacing:-0.334px">Balance</span>
<span class="t" style="left:334.3px;top:716.0px;font-size:16.5px;font-weight:400;color:#101214;font-family:'Liberation Sans',sans-serif;letter-spacing:0.311px">22/09/2025</span>
<span class="t" style="left:602.3px;top:716.0px;font-size:16.5px;font-weight:400;color:#101214;font-family:'Liberation Sans',sans-serif;letter-spacing:-0.049px">General English Daytime, Starts 22 Sep 2025 - Ends 31 Oct 2025(4 weeks)</span>
<span class="t" style="left:1459.0px;top:716.0px;font-size:16.5px;font-weight:400;color:#101214;font-family:'Liberation Sans',sans-serif;letter-spacing:-0.267px">$1,584.00</span>
<span class="t" style="left:334.3px;top:772.0px;font-size:16.5px;font-weight:400;color:#262829;font-family:'Liberation Sans',sans-serif;letter-spacing:0.311px">22/09/2025</span>
<span class="t" style="left:602.3px;top:772.0px;font-size:16.5px;font-weight:400;color:#262829;font-family:'Liberation Sans',sans-serif;letter-spacing:0.262px">Agent fee</span>
<span class="t" style="left:1472.0px;top:772.0px;font-size:16.5px;font-weight:400;color:#262829;font-family:'Liberation Sans',sans-serif;letter-spacing:-0.237px">$176.00</span>
<span class="t" style="left:1452.7px;top:813.5px;font-size:16.5px;font-weight:700;color:#2c2f33;font-family:'Liberation Sans',sans-serif;letter-spacing:0.433px">$1,760.00</span>
<span class="t" style="left:1591.0px;top:813.5px;font-size:16.5px;font-weight:700;color:#2c2f33;font-family:'Liberation Sans',sans-serif;letter-spacing:0.401px">$0.00</span>
<span class="t" style="left:1669.5px;top:813.5px;font-size:16.5px;font-weight:700;color:#2c2f33;font-family:'Liberation Sans',sans-serif;letter-spacing:0.381px">$0.00</span>
<span class="t" style="left:1754.0px;top:813.5px;font-size:16.5px;font-weight:700;color:#2c2f33;font-family:'Liberation Sans',sans-serif;letter-spacing:0.433px">$1,760.00</span>
</div>
<svg width="120" height="120" viewBox="0 0 1080 1080" style="left:250px;top:590px;filter:drop-shadow(0 2px 2.5px rgba(0,0,0,.35))">
<path d="M415 640 L415 165 Q415 112 476 112 Q537 112 537 165 L537 338 C548 296 652 300 660 368 C668 334 768 336 775 405 C783 366 880 364 880 440 L880 610 Q880 800 790 900 Q720 975 620 975 Q480 975 370 850 L200 650 Q140 580 215 548 Q250 535 300 565 Z" fill="#f8f8f8" stroke="#000" stroke-width="40" stroke-linejoin="round"/>
<path d="M537 335 V545 M660 365 V530 M775 405 V530" fill="none" stroke="#000" stroke-width="38"/>
</svg>
</body></html>
